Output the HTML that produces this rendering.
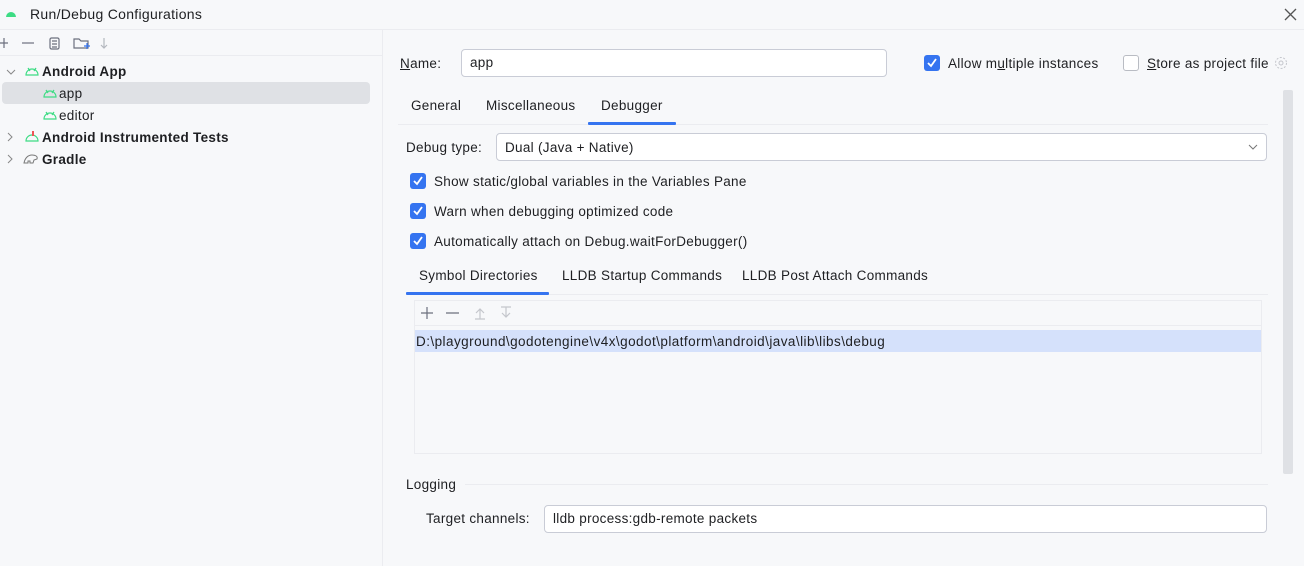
<!DOCTYPE html>
<html><head><style>
*{box-sizing:border-box;margin:0;padding:0}
body{width:1304px;height:566px;background:#f7f8fa;font-family:"Liberation Sans",sans-serif;font-size:13.5px;letter-spacing:0.3px;color:#1e1f22;position:relative;overflow:hidden}
.a{position:absolute;white-space:nowrap}
.cb{position:absolute;width:16px;height:16px;border-radius:3px;background:#3574f0}
.cb svg{position:absolute;left:2px;top:2px}
.cbe{position:absolute;width:16px;height:16px;border-radius:3px;border:1px solid #b9bcc3;background:#fff}
.inp{position:absolute;background:#fff;border:1px solid #c9ccd6;border-radius:4px}
</style></head><body>
<div class="a" style="left:0;top:0;width:1304px;height:30px;border-bottom:1px solid #ebecf0"></div>
<svg class="a" style="left:5px;top:10px" width="12" height="8"><path d="M1 7 A5 5 0 0 1 11 7Z" fill="#3ddc84"/></svg>
<div class="a" style="left:30px;top:6px;font-size:14px">Run/Debug Configurations</div>
<svg class="a" style="left:1284px;top:8px" width="13" height="13"><path d="M1 1L12 12M12 1L1 12" stroke="#555" stroke-width="1.3"/></svg>
<div class="a" style="left:382px;top:30px;width:1px;height:536px;background:#ebecf0"></div>
<div class="a" style="left:0;top:55px;width:382px;height:1px;background:#ebecf0"></div>
<svg class="a" style="left:0;top:36px" width="120" height="16" stroke="#6c707e" fill="none" stroke-width="1.2">
<path d="M0 7H8M4 2V12"/><path d="M22 7H34"/><rect x="50" y="2" width="9" height="11" rx="1.5"/><path d="M52 5H57M52 8H57M52 11H57"/><path d="M74 3H79L81 5H88V12H74Z"/><path d="M84 10H90M87 7V13" stroke="#3574f0"/><path d="M104 2V12M101 9L104 12L107 9" stroke="#b4b8bf"/>
</svg>
<svg class="a" style="left:6px;top:68px" width="10" height="8"><path d="M1 2L5 6L9 2" stroke="#888" fill="none"/></svg>
<svg class="a" style="left:25px;top:66px" width="14" height="10"><path d="M1 9A6 6 0 0 1 13 9Z M3 2L5 5M11 2L9 5" stroke="#3ddc84" fill="none" stroke-width="1.2"/></svg>
<div class="a" style="left:42px;top:64px;font-weight:bold">Android App</div>
<div class="a" style="left:2px;top:82px;width:368px;height:22px;background:#dfe1e5;border-radius:4px"></div>
<svg class="a" style="left:43px;top:88px" width="14" height="10"><path d="M1 9A6 6 0 0 1 13 9Z M3 2L5 5M11 2L9 5" stroke="#3ddc84" fill="none" stroke-width="1.2"/></svg>
<div class="a" style="left:59px;top:86px">app</div>
<svg class="a" style="left:43px;top:110px" width="14" height="10"><path d="M1 9A6 6 0 0 1 13 9Z M3 2L5 5M11 2L9 5" stroke="#3ddc84" fill="none" stroke-width="1.2"/></svg>
<div class="a" style="left:59px;top:108px">editor</div>
<svg class="a" style="left:6px;top:132px" width="8" height="10"><path d="M2 1L6 5L2 9" stroke="#888" fill="none"/></svg>
<svg class="a" style="left:25px;top:130px" width="14" height="12"><path d="M1 11A6 6 0 0 1 13 11Z" stroke="#3ddc84" fill="none" stroke-width="1.2"/><path d="M8 1V6" stroke="#e55" stroke-width="2"/></svg>
<div class="a" style="left:42px;top:130px;font-weight:bold">Android Instrumented Tests</div>
<svg class="a" style="left:6px;top:154px" width="8" height="10"><path d="M2 1L6 5L2 9" stroke="#888" fill="none"/></svg>
<svg class="a" style="left:23px;top:152px" width="16" height="12"><path d="M1 11C2 6 5 3 9 3C12 3 15 4 14 7L11 8L10 11H7V9H5V11Z" stroke="#777" fill="none"/></svg>
<div class="a" style="left:42px;top:152px;font-weight:bold">Gradle</div>

<div class="a" style="left:400px;top:56px"><u>N</u>ame:</div>
<div class="inp" style="left:461px;top:49px;width:426px;height:28px"></div>
<div class="a" style="left:470px;top:55px">app</div>
<div class="cb" style="left:924px;top:55px"><svg width="12" height="12"><path d="M2 6L5 9L10 2" stroke="#fff" stroke-width="1.8" fill="none"/></svg></div>
<div class="a" style="left:948px;top:56px">Allow m<u>u</u>ltiple instances</div>
<div class="cbe" style="left:1123px;top:55px"></div>
<div class="a" style="left:1147px;top:56px"><u>S</u>tore as project file</div>
<svg class="a" style="left:1273px;top:55px" width="16" height="16"><circle cx="8" cy="8" r="5.5" stroke="#c4c6cc" fill="none" stroke-dasharray="2 1.5"/><circle cx="8" cy="8" r="2" stroke="#c4c6cc" fill="none"/></svg>

<div class="a" style="left:1283px;top:90px;width:10px;height:384px;background:#dfe1e5;border-radius:2px"></div>
<div class="a" style="left:411px;top:98px">General</div>
<div class="a" style="left:486px;top:98px">Miscellaneous</div>
<div class="a" style="left:601px;top:98px">Debugger</div>
<div class="a" style="left:398px;top:124px;width:870px;height:1px;background:#ebecf0"></div>
<div class="a" style="left:588px;top:122px;width:88px;height:3px;background:#3574f0;border-radius:1px"></div>

<div class="a" style="left:406px;top:140px">Debug type:</div>
<div class="inp" style="left:496px;top:133px;width:771px;height:28px"></div>
<div class="a" style="left:505px;top:140px">Dual (Java + Native)</div>
<svg class="a" style="left:1248px;top:144px" width="10" height="7"><path d="M1 1L5 5L9 1" stroke="#777" fill="none"/></svg>

<div class="cb" style="left:410px;top:173px"><svg width="12" height="12"><path d="M2 6L5 9L10 2" stroke="#fff" stroke-width="1.8" fill="none"/></svg></div>
<div class="a" style="left:434px;top:174px">Show static/global variables in the Variables Pane</div>
<div class="cb" style="left:410px;top:203px"><svg width="12" height="12"><path d="M2 6L5 9L10 2" stroke="#fff" stroke-width="1.8" fill="none"/></svg></div>
<div class="a" style="left:434px;top:204px">Warn when debugging optimized code</div>
<div class="cb" style="left:410px;top:233px"><svg width="12" height="12"><path d="M2 6L5 9L10 2" stroke="#fff" stroke-width="1.8" fill="none"/></svg></div>
<div class="a" style="left:434px;top:234px">Automatically attach on Debug.waitForDebugger()</div>

<div class="a" style="left:419px;top:268px">Symbol Directories</div>
<div class="a" style="left:562px;top:268px">LLDB Startup Commands</div>
<div class="a" style="left:742px;top:268px">LLDB Post Attach Commands</div>
<div class="a" style="left:406px;top:294px;width:862px;height:1px;background:#ebecf0"></div>
<div class="a" style="left:406px;top:292px;width:143px;height:3px;background:#3574f0;border-radius:1px"></div>

<div class="a" style="left:414px;top:300px;width:848px;height:154px;border:1px solid #ebecf0"></div>
<div class="a" style="left:415px;top:325px;width:846px;height:1px;background:#ebecf0"></div>
<svg class="a" style="left:418px;top:305px" width="100" height="16" fill="none" stroke-width="1.2">
<path d="M3 8H15M9 2V14M28 8H41" stroke="#6c707e"/><path d="M62 14V4M58 8L62 4L66 8M57 14H67" stroke="#c4c6cc"/><path d="M88 2V12M84 8L88 12L92 8M83 2H93" stroke="#c4c6cc"/>
</svg>
<div class="a" style="left:415px;top:330px;width:846px;height:22px;background:#d5e1fb"></div>
<div class="a" style="left:416px;top:334px;letter-spacing:0.45px">D:\playground\godotengine\v4x\godot\platform\android\java\lib\libs\debug</div>

<div class="a" style="left:406px;top:477px">Logging</div>
<div class="a" style="left:465px;top:484px;width:803px;height:1px;background:#ebecf0"></div>
<div class="a" style="left:426px;top:511px">Target channels:</div>
<div class="inp" style="left:544px;top:505px;width:723px;height:28px"></div>
<div class="a" style="left:553px;top:511px">lldb process:gdb-remote packets</div>
</body></html>
